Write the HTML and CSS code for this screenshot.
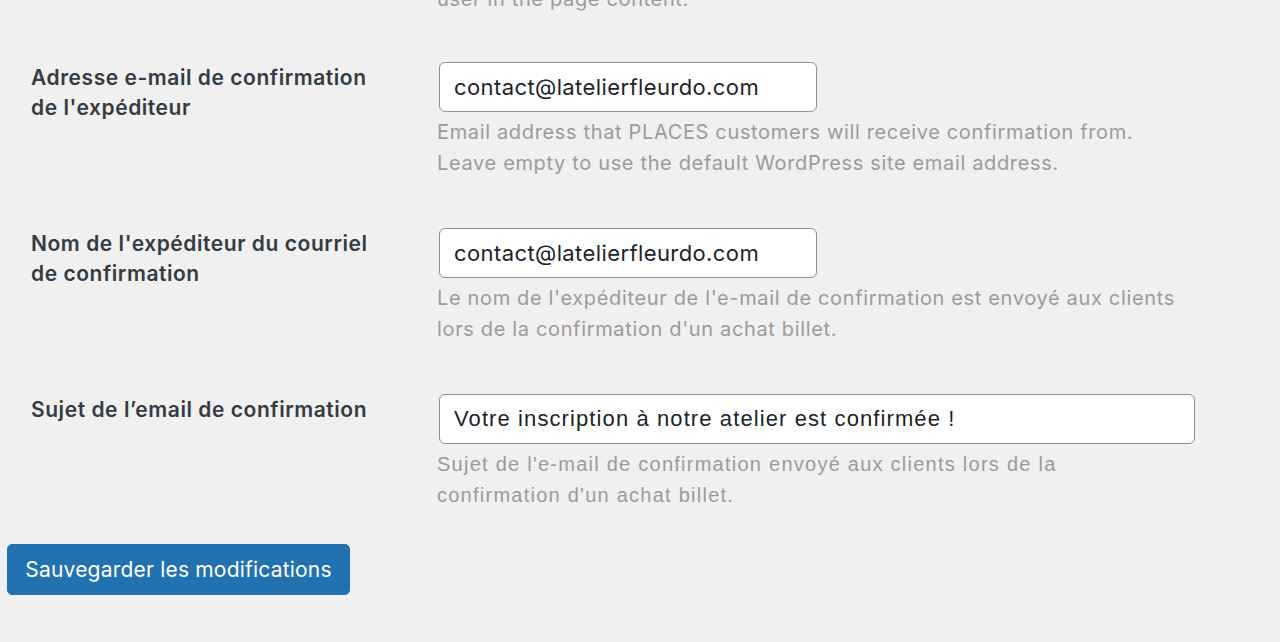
FILE: index.html
```html
<!DOCTYPE html>
<html lang="fr">
<head>
<meta charset="utf-8">
<link rel="stylesheet" href="styles.css">
</head>
<body>
<main class="wrap">
  <p class="desc top-desc">user in the page content.</p>
  <div class="form-table">
    <div class="row">
      <div class="label">Adresse e-mail de confirmation de l'expéditeur</div>
      <div class="field">
        <input class="input regular" type="text" value="contact@latelierfleurdo.com">
        <p class="desc">Email address that PLACES customers will receive confirmation from.<br>Leave empty to use the default WordPress site email address.</p>
      </div>
    </div>
    <div class="row">
      <div class="label">Nom de l'expéditeur du courriel de confirmation</div>
      <div class="field">
        <input class="input regular" type="text" value="contact@latelierfleurdo.com">
        <p class="desc">Le nom de l'expéditeur de l'e-mail de confirmation est envoyé aux clients<br>lors de la confirmation d'un achat billet.</p>
      </div>
    </div>
    <div class="row">
      <div class="label">Sujet de l’email de confirmation</div>
      <div class="field">
        <input class="input large narrow" type="text" value="Votre inscription à notre atelier est confirmée !">
        <p class="desc narrow">Sujet de l'e-mail de confirmation envoyé aux clients lors de la<br>confirmation d'un achat billet.</p>
      </div>
    </div>
  </div>
  <div class="submit-row">
    <button class="button-primary" type="button">Sauvegarder les modifications</button>
  </div>
</main>
</body>
</html>
```

FILE: styles.css
```css
html, body {
  margin: 0;
  padding: 0;
  background: #f0f0f1;
  height: 100%;
  overflow: hidden;
}
body {
  font-family: Inter, "Noto Sans", "Liberation Sans", sans-serif;
  color: #1d2327;
}
.wrap {
  padding-left: 7px;
  margin-top: -16px;
}
.desc {
  margin: 0;
  font-size: 20px;
  line-height: 31px;
  letter-spacing: 0.65px;
  color: #9b9b9b;
}
.top-desc {
  padding-left: 430px;
}
.form-table {
  display: flex;
  flex-direction: column;
  padding-top: 48px;
}
.row {
  display: grid;
  grid-template-columns: 430px 1fr;
  padding: 0 0 50px 0;
}
.label {
  padding-left: 24px;
  width: 344px;
  font-size: 21px;
  font-weight: 600;
  line-height: 30px;
  letter-spacing: 0.55px;
  color: #343b41;
}
.field {
  display: flex;
  flex-direction: column;
  align-items: flex-start;
}
.input {
  box-sizing: border-box;
  margin: -1px 0 5px 2px;
  height: 50px;
  border: 1.5px solid #8c8f94;
  border-radius: 6px;
  background: #fff;
  padding: 0 14px;
  font-family: inherit;
  font-size: 22px;
  letter-spacing: 0.4px;
  color: #1d2327;
  outline: none;
}
.input.regular { width: 378px; }
.input.large { width: 756px; }
.narrow {
  font-family: "Liberation Sans", Arial, sans-serif;
}
.input.narrow {
  font-size: 22px;
  letter-spacing: 1.1px;
}
.desc.narrow {
  font-size: 20px;
  letter-spacing: 1.25px;
}
.submit-row {
  margin-top: -17px;
}
.button-primary {
  box-sizing: border-box;
  width: 343px;
  height: 51px;
  background: #2271b1;
  border: 1px solid #2271b1;
  border-radius: 5px;
  color: #fff;
  font-family: Inter, "Noto Sans", "Liberation Sans", sans-serif;
  font-size: 21px;
  letter-spacing: 0.2px;
  padding: 0;
  cursor: pointer;
}
```
